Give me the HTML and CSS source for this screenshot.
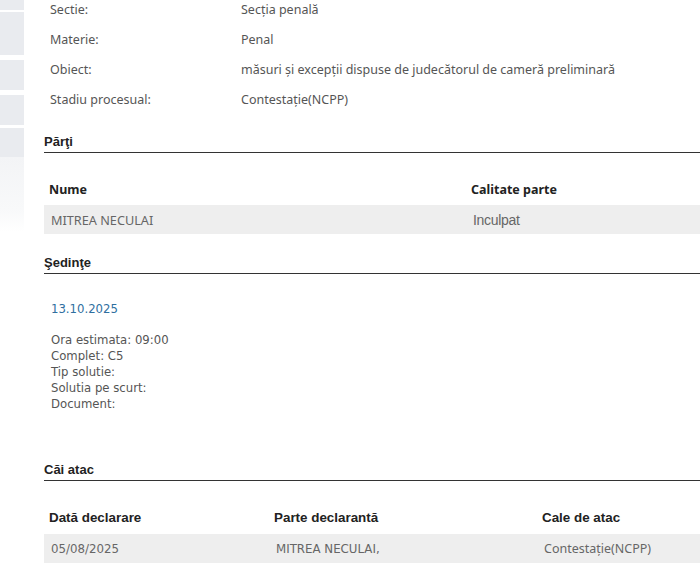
FILE: index.html
```html
<!DOCTYPE html>
<html lang="ro">
<head>
<meta charset="utf-8">
<link rel="stylesheet" href="styles.css">
</head>
<body>
<div class="page">
  <aside class="sidebar">
    <div class="blk b1"></div>
    <div class="blk b2"></div>
    <div class="blk b3"></div>
    <div class="blk b4"></div>
    <div class="blk b5"></div>
    <div class="fade"></div>
  </aside>
  <main class="main">
    <div class="info">
      <div class="info-row"><span class="lbl">Sectie:</span><span class="val">Secția penală</span></div>
      <div class="info-row"><span class="lbl">Materie:</span><span class="val">Penal</span></div>
      <div class="info-row"><span class="lbl">Obiect:</span><span class="val">măsuri și excepții dispuse de judecătorul de cameră preliminară</span></div>
      <div class="info-row"><span class="lbl">Stadiu procesual:</span><span class="val">Contestație(NCPP)</span></div>
    </div>

    <h3 class="sec sec-parti">Părţi</h3>
    <div class="tbl parti">
      <div class="thead"><span class="c1">Nume</span><span class="c2">Calitate parte</span></div>
      <div class="trow"><span class="c1 name">MITREA NECULAI</span><span class="c2 calit">Inculpat</span></div>
    </div>

    <h3 class="sec sec-sed">Şedinţe</h3>
    <div class="sedinta">
      <div class="date">13.10.2025</div>
      <div class="det">
        <div>Ora estimata: 09:00</div>
        <div>Complet: C5</div>
        <div>Tip solutie:</div>
        <div>Solutia pe scurt:</div>
        <div>Document:</div>
      </div>
    </div>

    <h3 class="sec sec-cai">Căi atac</h3>
    <div class="tbl cai">
      <div class="thead"><span class="d1">Dată declarare</span><span class="d2">Parte declarantă</span><span class="d3">Cale de atac</span></div>
      <div class="trow"><span class="d1 tah">05/08/2025</span><span class="d2 tah">MITREA NECULAI,</span><span class="d3 seg">Contestație(NCPP)</span></div>
    </div>
  </main>
</div>
</body>
</html>
```

FILE: styles.css
```css
* { box-sizing: border-box; }
html, body { margin: 0; padding: 0; background: #fff; }
body { overflow: hidden; height: 568px; }

.page {
  display: flex;
  gap: 20px;
  width: 700px;
}

.sidebar {
  width: 24px;
  flex: none;
  display: flex;
  flex-direction: column;
}
.blk { background: #e9ebef; }
.b1 { height: 10px; margin-bottom: 2px; }
.b2 { height: 43px; margin-bottom: 5px; }
.b3 { height: 30px; margin-bottom: 5px; }
.b4 { height: 30px; margin-bottom: 3px; }
.b5 { height: 29px; }
.fade { height: 75px; background: linear-gradient(#f3f4f6, #f8f9fa 70%, #ffffff); }

.main {
  flex: 1;
  min-width: 0;
}

.info {
  margin-top: -6px;
  font-family: "Noto Sans", "Open Sans", sans-serif;
  font-size: 12.5px;
  color: #555;
}
.info-row {
  display: flex;
  height: 30px;
  align-items: center;
  padding-left: 6px;
}
.lbl { width: 191px; flex: none; }
.val { flex: 1; }

.sec {
  margin: 0;
  font-family: "Liberation Sans", Arial, sans-serif;
  font-weight: bold;
  font-size: 13px;
  color: #222;
  border-bottom: 1px solid #333;
  padding-bottom: 3px;
  line-height: 14px;
}
.sec-parti { margin-top: 21px; }
.sec-sed { margin-top: 22px; }
.sec-cai { margin-top: 51px; }

.tbl .thead {
  display: flex;
  align-items: center;
  height: 32px;
  padding-left: 5px;
  font-weight: bold;
  color: #222;
}
.tbl .trow {
  display: flex;
  align-items: center;
  height: 29px;
  background: #eeeeee;
  padding-left: 7px;
  color: #666;
}

.parti { margin-top: 20px; }
.parti .thead { font-family: "Noto Sans", "Open Sans", sans-serif; font-size: 12.5px; }
.parti .c1 { width: 422px; flex: none; }
.parti .name { font-family: "Noto Sans", sans-serif; font-size: 12.7px; }
.parti .calit { font-family: "Liberation Sans", sans-serif; font-size: 14px; letter-spacing: -0.3px; }

.sedinta {
  padding-left: 7px;
  font-family: "DejaVu Sans", Tahoma, sans-serif;
  font-size: 11.7px;
  color: #555;
}
.date {
  margin-top: 27px;
  color: #2f6f9f;
  line-height: 16px;
}
.det { margin-top: 15px; line-height: 16px; }

.cai { margin-top: 20px; }
.cai .thead { font-family: "Liberation Sans", Arial, sans-serif; font-size: 13.4px; height: 33px; }
.cai .d1 { width: 225px; flex: none; }
.cai .d2 { width: 268px; flex: none; }
.cai .tah { font-family: "DejaVu Sans", Tahoma, sans-serif; font-size: 11.8px; }
.cai .seg { font-family: "Noto Sans", sans-serif; font-size: 12.5px; }
```
